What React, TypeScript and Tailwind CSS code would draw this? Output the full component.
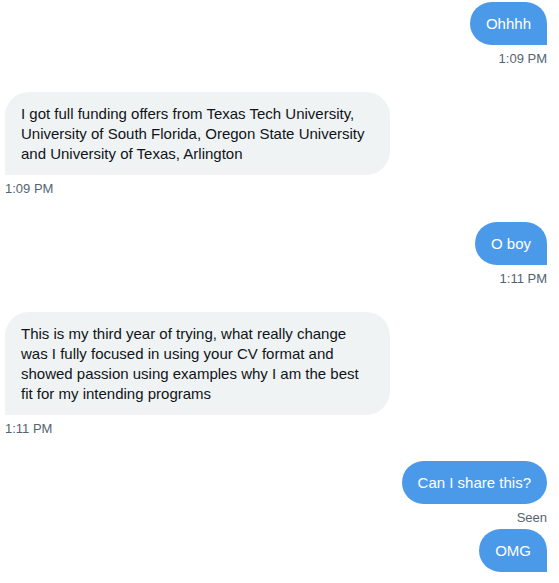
import clsx from 'clsx';

type Msg = {
  text: string;
  mine: boolean;
  meta?: string;
  tail?: boolean;
  gap: string;
};

const messages: Msg[] = [
  { text: 'Ohhhh', mine: true, meta: '1:09 PM', tail: true, gap: 'mt-[2px]' },
  {
    text: 'I got full funding offers from Texas Tech University, University of South Florida, Oregon State University and University of Texas, Arlington',
    mine: false,
    meta: '1:09 PM',
    tail: true,
    gap: 'mt-[25px]',
  },
  { text: 'O boy', mine: true, meta: '1:11 PM', tail: true, gap: 'mt-[25px]' },
  {
    text: 'This is my third year of trying, what really change was I fully focused in using your CV format and showed passion using examples why I am the best fit for my intending programs',
    mine: false,
    meta: '1:11 PM',
    tail: true,
    gap: 'mt-[25px]',
  },
  { text: 'Can I share this?', mine: true, meta: 'Seen', tail: false, gap: 'mt-[24px]' },
  { text: 'OMG', mine: true, tail: true, gap: 'mt-[3px]' },
];

export default function App() {
  return (
    <div
      className="w-[559px] h-[583px] overflow-hidden bg-white pl-[5px] pr-[12px] flex flex-col"
      style={{ fontFamily: '"Liberation Sans", Arial, sans-serif' }}
    >
      {messages.map((m, i) => (
        <div key={i} className={clsx('flex flex-col', m.gap, m.mine ? 'items-end' : 'items-start')}>
          <div
            className={clsx(
              'max-w-[385px] px-4 py-[11.5px] text-[15px] leading-5 rounded-[24px]',
              m.mine ? 'bg-[#4b9ae9] text-white' : 'bg-[#eff3f4] text-[#0f1419]',
              m.tail && (m.mine ? 'rounded-br-none' : 'rounded-bl-none')
            )}
          >
            {m.text}
          </div>
          {m.meta && (
            <div className="mt-[6px] text-[13px] leading-4 text-[#536471]">{m.meta}</div>
          )}
        </div>
      ))}
    </div>
  );
}
